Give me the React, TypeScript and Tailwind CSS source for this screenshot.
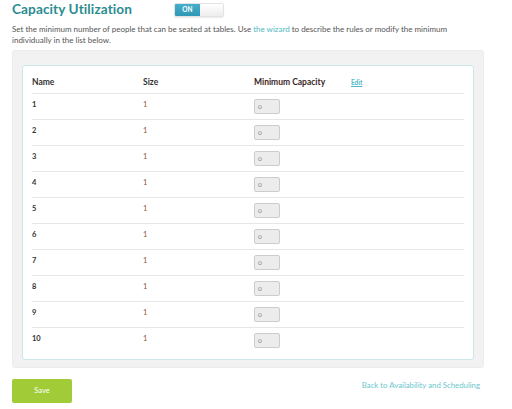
import React from "react";

const rows = [1, 2, 3, 4, 5, 6, 7, 8, 9, 10];

export default function App() {
  return (
    <div className="w-[512px] h-[409px] bg-white overflow-hidden font-['Lato','Noto_Sans',sans-serif] text-[#333]">
      <div className="flex items-center h-[20px] pl-[12px]">
        <h1 className="text-[13.6px] font-bold text-[#2b8c90] leading-none tracking-[0.1px] w-[162px]">Capacity Utilization</h1>
        <div className="flex h-[14px] w-[50px] rounded-[2px] overflow-hidden border border-[#e3e3e3] shadow-[0_1px_1px_rgba(0,0,0,0.08)]">
          <div className="w-[25px] h-full bg-gradient-to-b from-[#44aecb] to-[#2f98b6] text-white text-[6.5px] font-bold flex items-center justify-center">ON</div>
          <div className="flex-1 bg-gradient-to-b from-[#ffffff] to-[#ededed]"></div>
        </div>
      </div>
      <p className="pl-[12px] pr-[50px] mt-[4px] text-[8px] leading-[11px] text-[#555]">
        Set the minimum number of people that can be seated at tables. Use <span className="text-[#4fb8c2]">the wizard</span> to describe the rules or modify the minimum individually in the list below.
      </p>
      <div className="mx-[12px] w-[472px] mt-[4px] h-[318px] bg-[#f2f2f2] rounded-[3px] border border-[#ececec] px-[9px] pt-[14px] pb-[8px]">
        <div className="bg-white rounded-[3px] border border-[#cbe7ea] h-[295px] px-[9px] pt-[6px]">
          <div className="flex items-center h-[22px] border-b border-[#e6e6e6] text-[8.5px] font-bold text-[#333]">
            <div className="w-[111px]">Name</div>
            <div className="w-[111px]">Size</div>
            <div className="w-[97px] text-[#3a2626]">Minimum Capacity</div>
            <a className="text-[6.5px] text-[#4fb8c2] underline">Edit</a>
          </div>
          {rows.map((r, i) => (
            <div key={r} className={`flex items-start h-[26px] pt-[5px] ${i < rows.length - 1 ? "border-b border-[#e6e6e6]" : ""}`}>
              <div className="w-[111px] text-[7.5px] font-bold text-[#333] leading-[12px]">{r}</div>
              <div className="w-[111px] text-[7.5px] text-[#8a5a2b] leading-[12px]">1</div>
              <div className="w-[26px] h-[15px] bg-[#ececec] border border-[#cccccc] rounded-[2px] text-[6.5px] text-[#888] flex items-center pl-[3px]">0</div>
            </div>
          ))}
        </div>
      </div>
      <div className="flex items-start justify-between pl-[12px] pr-[32px] mt-[11px]">
        <button className="w-[60px] h-[24px] bg-[#a1cc38] rounded-[2px] text-white text-[7.5px]">Save</button>
        <a className="text-[#6cc6cd] text-[7.8px] mt-[1px]">Back to Availability and Scheduling</a>
      </div>
    </div>
  );
}
